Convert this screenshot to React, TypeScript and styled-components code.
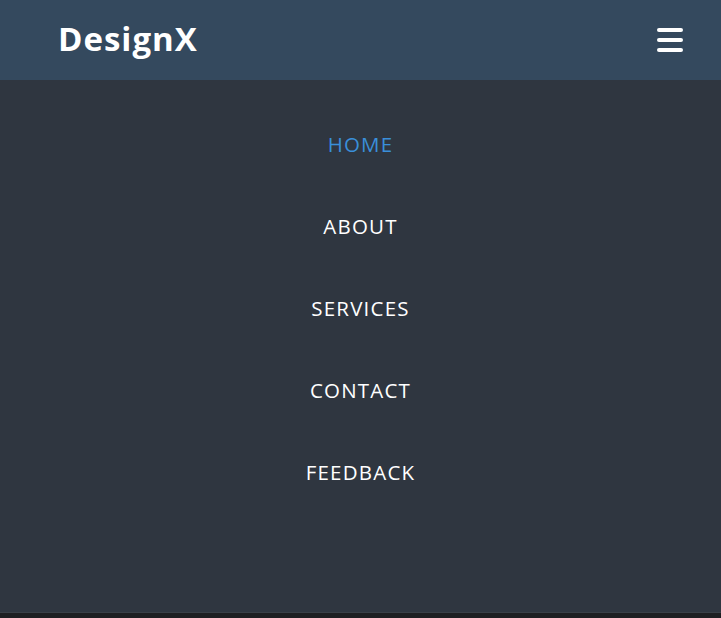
import React from "react";
import styled, { createGlobalStyle } from "styled-components";

const GlobalStyle = createGlobalStyle`
  html, body {
    margin: 0;
    padding: 0;
    background: #1e1f22;
    font-family: "Open Sans", "Liberation Sans", sans-serif;
  }
`;

const Header = styled.header`
  display: flex;
  justify-content: space-between;
  align-items: center;
  height: 80px;
  padding: 0 38px 0 58px;
  background-color: #34495e;
  color: #fff;
`;

const Logo = styled.h1`
  margin: 0 0 3px;
  font-size: 33px;
  font-weight: 700;
  letter-spacing: 1px;
  color: #fff;
`;

const MenuButton = styled.button`
  display: flex;
  flex-direction: column;
  gap: 6px;
  padding: 0;
  border: none;
  background: none;
  cursor: pointer;
`;

const Bar = styled.span`
  display: block;
  width: 26px;
  height: 4px;
  border-radius: 2px;
  background: #fff;
`;

const Menu = styled.nav`
  display: flex;
  flex-direction: column;
  align-items: center;
  padding: 23px 0 99px;
  background-color: #2f3640;
  border-bottom: 1px solid #3a4048;
`;

const MenuLink = styled.a<{ $active?: boolean }>`
  display: flex;
  align-items: center;
  height: 82px;
  font-size: 20.5px;
  letter-spacing: 1.2px;
  text-decoration: none;
  color: ${(p) => (p.$active ? "#3a8fd9" : "#fff")};
  cursor: pointer;
`;

const links = ["HOME", "ABOUT", "SERVICES", "CONTACT", "FEEDBACK"];

const App = () => {
  return (
    <>
      <GlobalStyle />
      <Header>
        <Logo>DesignX</Logo>
        <MenuButton aria-label="menu">
          <Bar />
          <Bar />
          <Bar />
        </MenuButton>
      </Header>
      <Menu>
        {links.map((l, i) => (
          <MenuLink key={l} $active={i === 0}>
            {l}
          </MenuLink>
        ))}
      </Menu>
    </>
  );
};

export default App;
